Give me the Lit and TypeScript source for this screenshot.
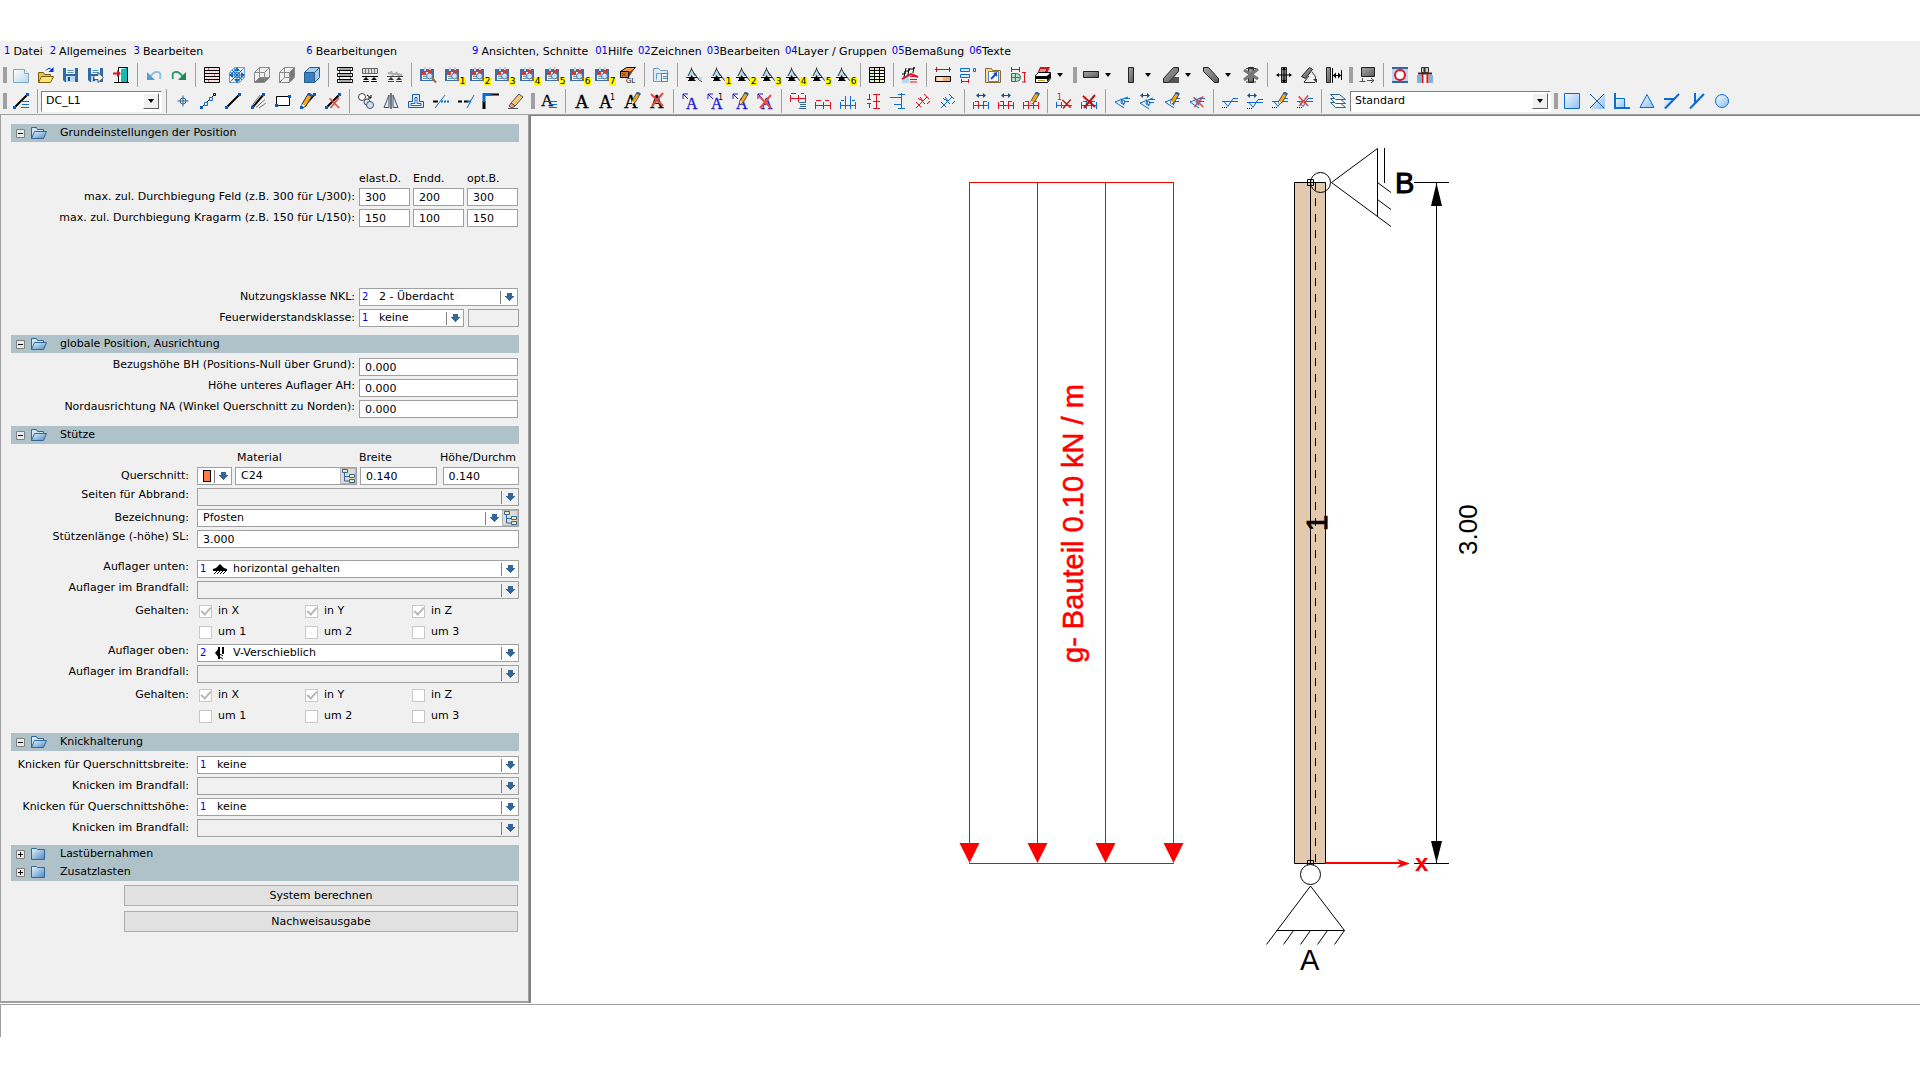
import { LitElement, html, svg, css, nothing } from "lit";
import { customElement, property, state } from "lit/decorators.js";

const K = "#000", R = "#e01020", B = "#0a6cd0", N = "#336699";

const p = (d: string, stroke = K, fill = "none", w = 1) =>
  svg`<path d=${d} stroke=${stroke} fill=${fill} stroke-width=${w}></path>`;
const f = (d: string, fill = K) => svg`<path d=${d} fill=${fill}></path>`;
const glyph = (ch: string, x: number, y: number, size: number, fill = K) =>
  svg`<text x=${x} y=${y} font-size=${size} fill=${fill} font-family="Liberation Serif, serif" stroke=${fill} stroke-width="0.3">${ch}</text>`;

const pencil = svg`${f("M5 11l6-10 4 2-6 10-4 2z", "#f6a81c")}${p("M5 11l6-10 4 2-6 10-4 2z", "#333")}${f("M10 2l1-2h2l3 2-1 2z", "#1f5fa8")}${f("M5 15v-4l3 2z", "#fff0c0")}`;
const cross = svg`${p("M2 3l12 12M14 2L3 15", "#e04a40", "none", 2)}`;
const darkCross = svg`${p("M2 3l12 11M14 2L3 15", "#c01010", "none", 2)}`;
const handle = (x: number, y: number) => f(`M${x} ${y}h3v3h-3z`, "#0a5cb8");
const floppy = svg`${f("M0 1h15v14H2l-2-2z", "#2d6aa5")}${f("M3 1h9v6H3z", "#e8f1fa")}${p("M4.5 3.5h6M4.5 5.5h6", "#5e8fbf")}${f("M3 9h9v6H3z", "#bcd8ef")}${f("M5 10h2v4H5z", "#1e4f80")}`;
const clipboard = svg`${f("M0 2h14v12H0z", "#3b6ea5")}${f("M2 5h10v8H2z", "#f7fbff")}${f("M4 0h2v4H4zM9 0h2v4H9z", "#bcd3e8")}${f("M2 4h4v4H2zM8 3h4v4H8z", "#d23a35")}${p("M3 9.500h4M3 11.500h4", "#6c8fb4")}${p("M12 11l4 4.500", "#b06a2a", "none", 2)}<circle cx="9.500" cy="9" r="3" fill="#c6e2f5" stroke="#4b7196"></circle>`;
const beam = svg`${f("M5.500 1l4 8h-8z", "#b4dcf4")}${p("M5.500.500v2M5.500 2l-3.500 7M5.500 2l4 7", "#333")}${p("M0 10.500h11", K)}${f("M5.500 8l2 3h1v2h1v1H2v-1h1v-2h1z", K)}${p("M7 5q2 2 4 5 2 4 5 4.500", "#234")}${f("M12 10h4v4q-3-1-4-4z", "#b4dcf4")}`;
const letter = glyph("A", 1, 15, 19);
const blueLetter = svg`${glyph("A", 4, 16, 16, "#1a1ad0")}${p("M1 6V1h5M1 1l5 5", "#1a1ad0")}`;
const hDim = (c: string) => p("M0 12.500h16M.5 9v7M8.500 9v7M15.500 9v7M1 7.500h5M10 7.500h4", c);
const chain = (c: string) => p("M0 12.500h16M.5 9v7M5.500 9v7M10.500 9v7M15.500 9v7M2 8.500h4M10 8.500h4", c);
const wide = svg`${p("M4 2.500h8", "#1d4f86")}${f("M6 0v5L3 2.500zM10 0v5l3-2.500z", "#1d4f86")}`;
const eye = svg`${p("M1 9l13-5M1 9l9 6M7 5.500l3 7M10 8.500h5M10 5.500h6", B)}<circle cx="9" cy="9" r="2" fill="none" stroke=${B}></circle>`;
const level = svg`${p("M0 8.500h11M2 8.500l4 5 5-8h5M10 8.500h6", B)}${f("M0 14h1v1H0zM2 14h1v1H2zM4 14h1v1H4z", K)}`;
const rotated = (c: string) => p("M1 15L12 4M1 9l5 5M5 6l5 5M9 1l5 5M3 5l2 2M8 8l-3-4M12 11l3-3", c);
const steel = (d: string) => svg`${p(d, "#222", "url(#steel)")}`;
const cubeLines = (c: string) => p("M.5 5.500h10v10H.5zM.5 5.500l5-5h10l-5 5M15.500.5v10l-5 5M5.500.5v10h10M5.500 10.500l-5 5", c);
const sky = (d: string) => p(d, B, "url(#sky)", 2);

const ICONS: Record<string, unknown> = {
  Neu: svg`${p("M.5 2.500h11l4 4v9H.5z", "#7ba9c6", "url(#sheet)")}${p("M11.500 2.500v4h4", "#7ba9c6", "#fff")}`,
  Öffnen: svg`${p("M.5 15.500v-10h5l1 2h6v3", "#7d5f10", "#f2c14a")}${p("M.5 15.500l3-6h12l-3 6z", "#7d5f10", "#ffe27a")}${p("M8 3.500q3-4 6-.5", "#0030c8")}${f("M15.500 0v5h-5z", "#0030c8")}`,
  Speichern: floppy,
  Speichern_unter: svg`${floppy}${p("M6 8.500h4V5.500l5.500 5-5.500 5V12.500H6z", "#4a5a6a", "#fff")}`,
  Beenden: svg`${p("M5.500.5h9v15h-9z", K, "#fff")}${f("M8 2l6-1v14l-6 1z", "#16b8b4")}${p("M1 15.500h15", K)}${p("M0 6.500h5", R, "none", 2)}${f("M4 3v7l4-3.500z", R)}`,
  Rückgängig: svg`${p("M14 12q2-8-4-7-3 .5-6 5", "#8cbfe6", "none", 2)}${f("M1 5v8h8z", "#5a9bd0")}`,
  Wiederholen: svg`${p("M2 12Q0 4 6 5q3 .5 6 5", "#28a068", "none", 2)}${f("M15 5v8H7z", "#1d8c58")}`,
  Wandansicht: svg`${f("M0 0h16v16H0z", "#f4dede")}${p("M.5.5h15v15H.5zM0 3.500h16M0 6.500h16M0 9.500h16M0 12.500h16", K)}${p("M4.500 1v2M10.500 7v2M4.500 13v2", "#a77")}`,
  Alles_zeigen: svg`${cubeLines("#6aa5d8")}${p("M8 1v14M1 8h14M3 3l10 10M13 3L3 13", "#1468b8")}${f("M8 0l3 4H5zM8 16l3-4H5zM0 8l4-3v6zM16 8l-4-3v6z", "#1468b8")}`,
  Unterseite: svg`${f("M1 15l4-4h10l-4 4z", "#777")}${cubeLines("#8a8a8a")}`,
  Seitenansicht: svg`${f("M11 5l4-4v10l-4 4z", "#777")}${cubeLines("#8a8a8a")}`,
  Vorderansicht: svg`${p("M.5 5.500l5-5h10v10l-5 5H.5z", "#2a5f94", "#a8cdec")}${p("M.5 5.500h10v10H.5z", "#2a5f94", "#3c7fc0")}${p("M10.500 5.500l5-5", "#2a5f94")}`,
  Balkenlagen: svg`${p("M.5.5h15v3H.5zM.5 6.500h15v3H.5zM.5 12.500h15v3H.5z", K, "#fff")}${p("M2.500 4v2M13.500 4v2M2.500 10v2M13.500 10v2M2 2h12M2 8h12M2 14h12", "#555")}`,
  Flächenlast: svg`${p("M.5 1.500h15v5H.5z", "#666", "#ddd")}${p("M3.500 2v4M6.500 2v4M9.500 2v4M12.500 2v4", "#777")}${p("M0 9.500h16M1 14.500h6M9 14.500h6", K)}${f("M4 10l3 3H1zM12 10l3 3H9z")}`,
  Auflast: svg`${p("M1 6l14 2M4 4l2 5M9 5l3 4", "#aaa", "none", 2)}${p("M0 9.500h16M1 14.500h6M9 14.500h6", "#444")}${f("M4 10l3 3H1zM12 10l3 3H9z", "#333")}`,
  Ansicht: clipboard,
  Ansicht_GL: svg`${p("M.5 4.500l6-4h9l-5 5z", K, "#f0a050")}${p("M.5 4.500h8v6h-8z", K, "#d9802e")}${f("M9 10V5l6-4z", "#7a4010")}${p("M2 6l4 3M2 9l4-3", "#7a4010")}<text x="6" y="16" font-size="7" fill="#000" font-family="Liberation Sans, sans-serif">GL</text>`,
  Projekt: svg`${p("M.5 14.500v-13h5l2 2h7v11z", "#6a9cc4", "#dcebf6")}${p("M3.500 12.500v-6h12", "#6a9cc4")}${p("M8.500 6.500h6v8h-6z", "#4d80ad", "#fff")}${p("M10 9.500h4M10 11.500h4", "#4d80ad")}`,
  Träger: beam,
  Liste: svg`${f("M0 0h16v4H0z", "#f8cfcf")}${f("M0 4h16v8H0z", "#fff")}${f("M0 4h5v12H0z", "#d4f0c8")}${f("M5 10h11v6H5z", "#f6f6c0")}${p("M.5.5h15v15H.5zM0 3.500h16M0 6.500h16M0 9.500h16M0 12.500h16M5.500 0v16M10.500 0v16", K)}`,
  Treppe: svg`${f("M0 11l7-5v10H0z", "#b8d8f0")}${p("M0 7h3V4h4V2h5V0M2 10l2-9M6 8l1-7M11 6l1-6", K)}${p("M0 12l9-5 7 3", R, "none", 2)}${p("M8 9.500h7M8 12.500h7M8 15h7", R)}`,
  Holzmaß: svg`${p("M0 2.500h16M1.500 0v5M14.500 0v5", "#b02020")}${p("M.5 9.500h15v5H.5z", K, "#f5b070")}${f("M2 10h6v4H2z", "#ffe0bc")}`,
  Einzelmaß: svg`${p("M.5 1.500h9v3h-9zM.5 7.500h9v3h-9z", B, "#d6e9fa")}${p("M13.500 1.500h2v3h-2z", B)}${p("M1 14.500h8M1.500 12v4M8.500 12v4", R)}`,
  Projektordner: svg`${p("M.5 15.500V1.500h6l1 2h8v12z", "#8a6c28", "#f5dc96")}${p("M3.500 4.500h10v10h-10z", "#5a7fb0", "#fff")}${p("M6 12l5-5", "#1b49c8", "none", 2)}${f("M12 5v5L8 6z", "#1b49c8")}`,
  Querschnittmaß: svg`${p("M1 2.500h9M1.500 0v5M9.500 0v5M14.500 5v10M12 5.500h4M12 15h4", R)}${p("M1.500 6.500h5q4 0 4 4t-4 4h-5z", "#2b7a50", "#b8e0d0")}${p("M5.500 7v8M1 10.500h9", "#2f6cae")}`,
  Drucken: svg`${f("M5 0h10l-3 7H2z", "#c81818")}${p("M5 3h6M4 5h6", "#fff")}${p("M.5 8.500l3-3h12v6l-3 4H.5z", K, "#fff")}${f("M1 9h11v3H1zM12 9l3-3v5l-3 4z")}${p("M3 13.500h7", "#c8a020")}`,
  Balken: steel("M.5 4.500h15v6H.5z"),
  Stütze: steel("M5.500.5h5v15h-5z"),
  Sparren: svg`${f("M10 10h6v6H5z", "#555")}${steel("M.5 11.500L10.500.5h5v4l-10 11h-5z")}`,
  Strebe: steel("M.5.5h5l10 11v4h-4L.5 4.500z"),
  Stab_löschen: svg`${steel("M5.500.5h5v15h-5z")}${p("M1 3l14 9M15 2L1 13", "#777", "none", 3)}${p("M3 1.500h10M3 15h10", "#333")}`,
  Schieben: svg`${steel("M5.500.5h5v15h-5z")}${p("M8 1v14M1 8h14", K)}${f("M8 0l2 3H6zM8 16l2-3H6zM0 8l3-2v4zM16 8l-3-2v4z")}`,
  Drehen: svg`${steel("M.5 9.500l8-9 3 2-7 9z")}${p("M3 15.500h11M3 15L8 9M11 5q4 3 4 9", "#333")}${f("M12 12h4v4z", "#333")}`,
  Abstand: svg`${steel("M.5.5h4v15h-4z")}${p("M6.500 1v15M6 8.500h9M15.500 3v10", K)}${f("M7 8.500l3-3v6zM15 8.500l-3-3v6z")}`,
  Platte: svg`${steel("M2.500.5h13v9h-13z")}${p("M.5 14.500h6M3.500 11v4M8 13.500h7M12 11l3 2.500-3 2.500", "#555")}`,
  Kreisausschnitt: svg`${f("M0 0h16v16H0z", "#b9d9f2")}${p("M0 1h16M0 15h16", N, "none", 2)}<circle cx="8" cy="8" r="5" fill="#fff" stroke=${R} stroke-width="2"></circle>`,
  Verbinder: svg`${p("M4.500.5h7v5h-7z", "#333", "#ccc")}${p("M7.500 1v4M1 6.500h14", "#333", "none", 2)}${f("M0 8h4v8H0zM12 8h4v8h-4z", "#7fb3dc")}${p("M5.500 7v9M10.500 7v9", "#d81818", "none", 2)}`,

  Linientyp: svg`${p("M1 15L14 2", K, "none", 2)}${handle(0, 13)}${handle(13, 0)}${p("M8 8.500h8M9 11.500h7M8 14.500h8", B)}`,
  Punkt: svg`<circle cx="8" cy="8" r="3" fill="none" stroke=${N}></circle>${p("M8 2.500v11M2.500 8h11", N)}`,
  Punktkette: svg`${p("M2 14l3-3M7 9l2-2M11 5l3-3", K)}${p("M4.500 9.500h3v3h-3zM9.500 4.500h3v3h-3z", B, "#fff")}${handle(0, 13)}${p("M13.500.5h2v2h-2z", K)}`,
  Linie: svg`${p("M1 15L15 1", K, "none", 2)}${handle(0, 13)}${handle(13, 0)}`,
  Parallele: svg`${p("M1 14L10 2M6 14.500l9-8", "#777")}${p("M3 14L14 1", K, "none", 2)}${p("M9 15l7-5", "#777")}${handle(1, 13)}${handle(12, 0)}`,
  Rechteck: svg`${p("M1.500 3.500h13v9h-13z", K, "#fff")}${handle(0, 11)}${handle(13, 2)}`,
  Linie_bearbeiten: svg`${p("M2 15L15 1", K, "none", 2)}<g transform="translate(-3 0)">${pencil}</g>${handle(0, 13)}${handle(13, 0)}`,
  Linie_löschen: svg`${p("M1 15L15 1", K, "none", 2)}${handle(0, 13)}${handle(13, 0)}<g transform="translate(3 3) scale(.8)">${cross}</g>`,
  Kopieren: svg`<circle cx="4" cy="4" r="3.500" fill="#fff" stroke="#444"></circle><circle cx="9" cy="9" r="3" fill="#cfe0f0" stroke="#456"></circle><circle cx="12" cy="12" r="3.500" fill="#cfe0f0" stroke="#456"></circle>${p("M9 2l4 3M13 2v3h-3", K)}`,
  Spiegeln: svg`${p("M1 14.500L6 2v12.500zM10 2l5 12.500h-5z", "#456", "#dceaf6")}${p("M8 0v16", K)}`,
  Kontur: svg`${p("M.5 14.500v-6h4v-7h7v7h4v6z", "#1f5f9f", "#dceaf8")}${p("M3 12.500v-2h4v-6h2v6h4v2z", B, "#fff")}`,
  Trennen: svg`${p("M0 8.500h5", K, "none", 2)}${p("M2 15L12 2", B)}${p("M8 8.500h2M11 8.500h2M14 8.500h2", B, "none", 2)}`,
  Verlängern: svg`${p("M0 8.500h4M6 8.500h4", K, "none", 2)}${p("M9 15l7-13", B)}${p("M9 8.500h4", B, "none", 2)}`,
  Ecke: svg`${p("M1 16V8", K, "none", 3)}${p("M1 9V1.500h8", B, "none", 3)}${p("M9 1.500h7", K, "none", 2)}`,
  Radieren: svg`${p("M3 10l8-9 4 3-8 9z", "#555", "#f0c878")}${p("M3 10l4 3-3 2-3-2z", "#555", "#f4a0a0")}${p("M0 15.500h10", "#555")}`,
  Texttyp: svg`${glyph("A", 0, 13, 17)}${p("M8 8.500h8M9 11.500h7M8 14.500h8", B)}`,
  Text: letter,
  Text_Index: svg`${glyph("A", 0, 15, 18)}<text x="11" y="7" font-size="8" fill="#000" font-family="DejaVu Sans, sans-serif">1</text>`,
  Text_bearbeiten: svg`${glyph("A", 0, 15, 19)}<g transform="translate(4 -1) scale(.8)">${pencil}</g>`,
  Text_löschen: svg`${letter}<g transform="translate(0 -2)">${cross}</g>`,
  Hinweis: blueLetter,
  Hinweis_Index: svg`${blueLetter}<text x="11" y="7" font-size="8" fill="#000" font-family="DejaVu Sans, sans-serif">1</text>`,
  Hinweis_bearbeiten: svg`${blueLetter}<g transform="translate(4 -1) scale(.8)">${pencil}</g>`,
  Hinweis_löschen: svg`${blueLetter}${cross}`,
  Bemaßungstyp: svg`${p("M0 5.500h16M.5 2v7M8.500 2v7M15.500 2v7M1 .5h5M11 .5h3", R)}${p("M9 9.500h7M10 11.500h6M10 13.500h6M9 15.500h7", N)}`,
  Maß_waagerecht: hDim(R),
  Maß_Kette: p("M0 12.500h16M.5 9v7M5.500 3v13M10.500 3v13M15.500 9v7M1 7.500h3M12 7.500h3", B),
  Maß_senkrecht: p("M11.500 1v15M8 1.500h7M8 8.500h7M8 15.500h7M4.500 1v6M4.500 11v4M2 6.500h4M2 10.500h4", R),
  Maß_Höhe: p("M11.500 0v16M8 1.500h7M0 4.500h12M4 11.500h8M8 15.500h7", B),
  Maß_schräg: rotated(R),
  Maß_schräg_Kette: rotated(B),
  Maß_Breite: svg`${chain(B)}${p("M4 12.500h9M5.500 9v6M10.500 9v6", R)}${wide}`,
  Maß_Abstand: svg`${chain(R)}${wide}`,
  Maß_bearbeiten: svg`${chain(R)}<g transform="translate(4 -1) scale(.8)">${pencil}</g>`,
  Einzelmaß_löschen: svg`${p("M0 12.500h16M.5 9v6M5.500 9v6", B)}<g transform="translate(5 5) scale(.7)">${darkCross}</g><text x="1" y="7" font-size="8" fill="#e01020" font-family="DejaVu Sans, sans-serif">1</text>`,
  Maß_löschen: svg`${chain(B)}${darkCross}`,
  Blickpunkt: eye,
  Blickpunkt_Breite: svg`<g transform="translate(0 1)">${eye}</g><g transform="translate(-2 0)">${wide}</g>`,
  Blickpunkt_bearbeiten: svg`${eye}<g transform="translate(3 -1) scale(.8)">${pencil}</g>`,
  Blickpunkt_löschen: svg`${eye}<g transform="translate(3 2) scale(.8)">${cross}</g>`,
  Höhenkote: level,
  Höhenkote_Breite: svg`<g transform="translate(0 1)">${level}</g><g transform="translate(-3 0)">${wide}</g>`,
  Höhenkote_bearbeiten: svg`${level}<g transform="translate(3 -1) scale(.8)">${pencil}</g>`,
  Höhenkote_löschen: svg`${level}<g transform="translate(0 1) scale(.8)">${cross}</g>`,
  Ebenen: svg`${p("M.5 9.500h9l6 5h-10z", "#2d5f8f", "#fff")}${p("M.5 5.500h9l6 5h-10z", "#2d5f8f", "#fff")}${p("M.5 1.500h9l6 5h-10z", "#2d5f8f", "#e8f2fb")}`,
  Fang_Fläche: p("M.5.5h15v15H.5z", B, "url(#sky)"),
  Fang_Schnittpunkt: svg`${f("M1 16l7-8 8 8zM8 8l8-8v16z", "url(#sky)")}${p("M1 1l14 14M15 1L1 15", "#1660b0")}`,
  Fang_Lot: svg`${f("M1 5h10v10H1z", "url(#sky)")}${p("M1.500 0v14.500h14.500M1 5.500h9.500v9", B, "none", 1)}${p("M1 0v15h15", B, "none", 2)}`,
  Fang_Mitte: p("M8 1.500l7 13H1z", B, "url(#sky)"),
  Fang_Linie: svg`${f("M1 6h10l-8 9H0z", "url(#sky)")}${p("M0 6h10", B, "none", 2)}${p("M1 15.500L15 1", B, "none", 2)}`,
  Fang_Parallele: svg`${f("M7 1h8l-8 10z", "url(#sky)")}${p("M6 0v10M1 15.500L15 1", B, "none", 2)}`,
  Fang_Kreis: svg`<circle cx="8" cy="8" r="6.500" fill="url(#sky)" stroke=${B} stroke-width="1"></circle>`,

  "ordner-offen": svg`${p("M.5 11.500V.5h5l1 2h6v2", N, "#cfe4f5")}${p("M.5 11.500l3-7h12l-3 7z", N, "url(#folder)")}`,
  "ordner-zu": svg`${p("M.5 11.500V.5h5l1 1h7v10z", N, "url(#folder)")}`,
  baum: svg`${p("M3.500 3v9h5M3.500 7.500h5", N)}${p("M1.500.5h5v3h-5zM8.500 5.500h5v3h-5zM8.500 10.500h5v3h-5z", N, "#ffe9a0")}`,
  "lager-unten": svg`${f("M7 1l4 4 3 1v2H0V6l3-1z")}${p("M1 11l3-3M4 11l3-3M7 11l3-3M10 11l3-3", K)}`,
  "lager-oben": svg`${f("M2 6l4-5v10z")}${f("M5 0h2v12H5zM9 0h2v7H9z")}${p("M7 7l3 2M7 10l3 2", K)}`,
};

const DEFS = svg`<defs>
  <linearGradient id="steel" x1="0" y1="0" x2="1" y2="1"><stop offset="0" stop-color="#a8a8a8"></stop><stop offset="1" stop-color="#5a5a5a"></stop></linearGradient>
  <linearGradient id="sky" x1="0" y1="0" x2="1" y2="1"><stop offset="0" stop-color="#f2f9ff"></stop><stop offset="1" stop-color="#8cc0f2"></stop></linearGradient>
  <linearGradient id="sheet" x1="0" y1="0" x2="1" y2="1"><stop offset="0" stop-color="#ffffff"></stop><stop offset="1" stop-color="#b4d8ec"></stop></linearGradient>
  <linearGradient id="folder" x1="0" y1="0" x2="1" y2="1"><stop offset="0" stop-color="#eaf4fc"></stop><stop offset="1" stop-color="#4a8cc4"></stop></linearGradient>
</defs>`;

const icon = (name: string, w = 16, h = 16) =>
  html`<svg class="icon" width=${w} height=${h} viewBox=${`0 0 ${w} ${h}`} aria-hidden="true">${DEFS}${ICONS[name]}</svg>`;

const TOP_BAR =
  ": Neu Öffnen Speichern Speichern_unter Beenden | Rückgängig Wiederholen | Wandansicht Alles_zeigen Unterseite Seitenansicht Vorderansicht | Balkenlagen Flächenlast Auflast | " +
  "Ansicht Ansicht#1 Ansicht#2 Ansicht#3 Ansicht#4 Ansicht#5 Ansicht#6 Ansicht#7 Ansicht_GL | Projekt | Träger Träger#1 Träger#2 Träger#3 Träger#4 Träger#5 Träger#6 | Liste | Treppe | " +
  "Holzmaß Einzelmaß Projektordner Querschnittmaß Drucken v : Balken v Stütze v Sparren v Strebe v Stab_löschen | Schieben Drehen Abstand : Platte | Kreisausschnitt Verbinder";
const LINE_BAR =
  ": Linientyp | $Linienstil | Punkt Punktkette Linie Parallele Rechteck Linie_bearbeiten Linie_löschen | Kopieren Spiegeln Kontur Trennen Verlängern Ecke Radieren : Texttyp | " +
  "Text Text_Index Text_bearbeiten Text_löschen | Hinweis Hinweis_Index Hinweis_bearbeiten Hinweis_löschen | " +
  "Bemaßungstyp Maß_waagerecht Maß_Kette Maß_senkrecht Maß_Höhe Maß_schräg Maß_schräg_Kette | Maß_Breite Maß_Abstand Maß_bearbeiten | Einzelmaß_löschen Maß_löschen | " +
  "Blickpunkt Blickpunkt_Breite Blickpunkt_bearbeiten Blickpunkt_löschen | Höhenkote Höhenkote_Breite Höhenkote_bearbeiten Höhenkote_löschen | Ebenen $Layer : " +
  "Fang_Fläche Fang_Schnittpunkt Fang_Lot Fang_Mitte Fang_Linie Fang_Parallele Fang_Kreis";

const CHOICES: Record<string, string> = { Linienstil: "DC_L1", Layer: "Standard" };

const MENU: Array<[string, string, string?]> = [
  ["1", "Datei"], ["2", "Allgemeines"], ["3", "Bearbeiten", "far"], ["6", "Bearbeitungen", "mid"], ["9", "Ansichten, Schnitte"],
  ["01", "Hilfe"], ["02", "Zeichnen"], ["03", "Bearbeiten"], ["04", "Layer / Gruppen"], ["05", "Bemaßung"], ["06", "Texte"],
];

const base = css`
  :host { box-sizing: border-box; }
  * { box-sizing: border-box; }
  button, input, select { font: inherit; color: inherit; margin: 0; padding: 0; border: 0; background: none; border-radius: 0; outline: none; }
  select { appearance: none; min-width: 0; flex: 1; height: 100%; }
  .icon { display: block; flex: none; overflow: visible; }
`;

@customElement("tool-bars")
class ToolBars extends LitElement {
  static styles = [base, css`
    :host { display: block; background: #f0f0f0; border-bottom: 1px solid #a0a0a0; white-space: nowrap; overflow: hidden; }
    .menu { display: flex; height: 21px; padding-left: 4px; gap: 7px; }
    .entry { display: flex; align-items: center; gap: 3px; }
    .entry.tight { gap: 0; margin-right: -2px; }
    .far { margin-right: 96px; }
    .mid { margin-right: 68px; }
    .key { color: #0000e6; font-size: 10px; padding-bottom: 2px; }
    .bar { display: flex; align-items: center; height: 26px; }
    .tool { position: relative; flex: none; width: 25px; height: 24px; display: grid; place-items: center; }
    .badge { position: absolute; right: -1px; bottom: 1px; width: 7px; height: 9px; background: #ffff00; font-size: 9px; line-height: 9px; text-align: center; }
    .sep { flex: none; width: 8px; height: 24px; display: grid; place-items: center; }
    .sep::before { content: ""; width: 1px; height: 24px; background: #a0a0a0; }
    .grip { flex: none; width: 8px; height: 16px; padding: 0 1px 0 3px; }
    .grip::before { content: ""; display: block; height: 16px; background: radial-gradient(circle at 1px 1px, #a0a0a0 1px, transparent 1px) 0 0 / 2px 2px; }
    .drop { flex: none; width: 15px; height: 24px; padding-left: 2px; display: flex; align-items: center; }
    .choice { flex: none; display: flex; height: 21px; background: #fff; border: 1px solid; border-color: #808080 #fff #fff #808080; padding: 1px 2px 1px 4px; }
    .linienstil { width: 121px; }
    .layer { width: 201px; }
    .open { width: 16px; height: 16px; background: #f0f0f0; border: 1px solid; border-color: #fff #606060 #606060 #fff; display: grid; place-items: center; pointer-events: none; }
  `];

  private arrow() {
    return html`<svg class="icon" width="6" height="4" viewBox="0 0 6 4" aria-hidden="true"><path d="M0 0h6L3 4z"></path></svg>`;
  }

  private item(token: string) {
    if (token === "|") return html`<span class="sep"></span>`;
    if (token === ":") return html`<span class="grip"></span>`;
    if (token === "v") return html`<button class="drop" aria-label="Auswahl">${this.arrow()}</button>`;
    if (token[0] === "$") {
      const name = token.slice(1);
      return html`<label class="choice ${name.toLowerCase()}"><select aria-label=${name}><option>${CHOICES[name]}</option></select><span class="open">${this.arrow()}</span></label>`;
    }
    const [name, badge] = token.split("#");
    return html`<button class="tool" aria-label=${name.replace(/_/g, " ") + (badge ? " " + badge : "")}>${icon(name)}${badge ? html`<span class="badge">${badge}</span>` : nothing}</button>`;
  }

  render() {
    return html`
      <nav class="menu">${MENU.map(([key, text, gap]) => html`
        <button class="entry ${key.length > 1 ? "tight" : ""} ${gap ?? ""}"><span class="key">${key}</span><span>${text}</span></button>`)}
      </nav>
      <div class="bar">${TOP_BAR.split(" ").map((t) => this.item(t))}</div>
      <div class="bar">${LINE_BAR.split(" ").map((t) => this.item(t))}</div>`;
  }
}

@customElement("group-box")
class GroupBox extends LitElement {
  @property() heading = "";
  @property({ type: Boolean, reflect: true }) open = false;
  static styles = [base, css`
    :host { display: block; }
    :host([open]) { margin-bottom: 8px; }
    .head { display: flex; align-items: center; width: 100%; height: 18px; padding-left: 5px; background: #afc2c9; text-align: left; }
    .sign { width: 9px; height: 9px; margin-right: 6px; }
    .name { flex: 1; }
    .folder { width: 29px; }
    .body { display: flex; flex-direction: column; gap: 3px; padding-top: 5px; }
  `];
  render() {
    return html`
      <button class="head" aria-expanded=${this.open} @click=${() => (this.open = !this.open)}>
        <svg class="icon sign" viewBox="0 0 9 9" aria-hidden="true"><path d="M.5.5h8v8h-8z" fill="#e6ecee" stroke="#808080"></path><path d=${this.open ? "M2 4.500h5" : "M2 4.500h5M4.500 2v5"} stroke="#000"></path></svg>
        <span class="folder">${icon(this.open ? "ordner-offen" : "ordner-zu", 16, 12)}</span>
        <span class="name">${this.heading}</span>
      </button>
      ${this.open ? html`<div class="body"><slot></slot></div>` : nothing}`;
  }
}

interface Combo { id: string; value?: string; key?: string; symbol?: string; swatch?: boolean; tree?: boolean; }

@customElement("column-form")
class ColumnForm extends LitElement {
  @state() private held: Record<string, boolean[]> = {
    unten: [true, true, true, false, false, false],
    oben: [true, true, false, false, false, false],
  };
  static styles = [base, css`
    :host { display: block; background: #f0f0f0; border: solid #a0a0a0; border-width: 0 1px 2px 1px; padding: 9px 9px 0 10px; }
    .row { display: flex; height: 18px; gap: 4px; align-items: center; }
    .row.low { gap: 8px; }
    .caption { flex: 1; text-align: right; white-space: nowrap; line-height: 16px; }
    .high { padding-bottom: 4px; }
    .fields { display: flex; gap: 4px; height: 18px; flex: none; }
    .narrow { width: 160px; }
    .inset { padding-right: 1px; }
    .wide { width: 322px; }
    .titles { display: flex; justify-content: flex-end; height: 15px; line-height: 18px; white-space: nowrap; }
    .top { padding-top: 25px; height: 38px; line-height: 13px; }
    .third { width: 54px; }
    .third.last { width: 52px; }
    .material { width: 122px; }
    .breite { width: 81px; }
    .hoehe { width: 79px; }
    .apart { margin-top: 58px; }
    .near { margin-top: 9px; }
    .field { flex: 1; min-width: 0; height: 18px; border: 1px solid #a0a0a0; background: #fff; padding: 0 5px; }
    .field:disabled { background: #f0f0f0; }
    .third-field { flex: 0 0 51px; padding: 0 5px; }
    .third-fields { gap: 3px; }
    .combo { flex: 1; min-width: 0; display: flex; align-items: center; height: 18px; border: 1px solid #a0a0a0; background: #fff; }
    .combo.off { background: #f0f0f0; }
    .combo.small { flex: 0 0 105px; }
    .combo.swatched { flex: 0 0 35px; }
    .combo.stoff { flex: 0 0 122px; }
    .key { width: 19px; padding-left: 2px; color: #0000e6; font-size: 10px; }
    .key.slim { width: 15px; }
    .symbol { margin-right: 6px; }
    .plain { padding-left: 5px; }
    .swatch { flex: none; width: 8px; height: 12px; margin-left: 5px; background: #ff7f40; border: 1px solid #000; }
    .down { flex: none; width: 17px; height: 13px; border-left: 1px solid #808080; display: grid; place-items: center; pointer-events: none; }
    .tree { flex: none; width: 16px; height: 16px; background: #dcdcdc; border: 1px solid #b4b4b4; display: grid; place-items: center; }
    .dims { display: flex; gap: 6px; flex: 1; min-width: 0; }
    .material-fields { gap: 3px; }
    .checks { display: grid; grid-template-columns: 106px 107px 1fr; align-items: center; width: 322px; padding-left: 2px; }
    .check { display: flex; align-items: center; gap: 6px; white-space: nowrap; }
    .box { appearance: none; width: 13px; height: 13px; background: #fff; border: 1px solid #c8c8c8; display: grid; place-items: center; }
    .box:checked::after { content: ""; width: 4px; height: 8px; border: solid #b8b8b8; border-width: 0 2px 2px 0; transform: translateY(-1px) rotate(42deg); }
    .actions { display: flex; flex-direction: column; gap: 5px; padding: 4px 1px 0 113px; }
    .action { height: 21px; background: #e1e1e1; border: 1px solid #adadad; }
  `];

  private caption(id: string, text: string, high = false) {
    return html`<label class="caption ${high ? "high" : ""}" for=${id}>${text}</label>`;
  }
  private down() {
    return html`<span class="down"><svg class="icon" width="9" height="8" viewBox="0 0 9 8" shape-rendering="crispEdges" aria-hidden="true"><path d="M2 0h5v3h2v1H8v1H7v1H6v1H5v1H4V7H3V6H2V5H1V4H0V3h2z" fill="#336699"></path></svg></span>`;
  }
  private tree() {
    return html`<button class="tree" aria-label="Katalog">${icon("baum", 14, 14)}</button>`;
  }
  private combo(c: Combo, kind = "") {
    const off = c.value === undefined && !c.swatch;
    return html`<div class="combo ${off ? "off" : ""} ${kind}">
      ${c.key ? html`<span class="key ${c.symbol ? "slim" : ""}">${c.key}</span>` : nothing}
      ${c.symbol ? html`<span class="symbol">${icon(c.symbol, 14, 12)}</span>` : nothing}
      ${c.swatch ? html`<span class="swatch"></span>` : nothing}
      <select id=${c.id} class=${c.key || c.swatch ? "" : "plain"} ?disabled=${off} aria-label=${c.swatch ? "Querschnittsform" : nothing}><option>${c.value ?? ""}</option></select>
      ${this.down()}${c.tree ? this.tree() : nothing}
    </div>`;
  }
  private limits(id: string, text: string, values: string[]) {
    return html`<div class="row">${this.caption(id + "0", text)}
      <div class="fields narrow third-fields">${values.map((v, i) => html`<input class="field third-field" id=${id + i} aria-label=${i ? text + " " + (i + 1) : nothing} .value=${v}>`)}</div></div>`;
  }
  private height(id: string, text: string) {
    return html`<div class="row">${this.caption(id, text, true)}
      <div class="fields narrow inset"><input class="field" id=${id} .value=${"0.000"}></div></div>`;
  }
  private line(c: Combo, text: string, high = false, extra = "") {
    return html`<div class="row low ${extra}">${this.caption(c.id, text, high)}<div class="fields wide">${this.combo(c)}</div></div>`;
  }
  private checks(id: string) {
    const names = ["in X", "in Y", "in Z", "um 1", "um 2", "um 3"];
    return [0, 3].map((from) => html`<div class="row low"><span class="caption">${from ? "" : "Gehalten:"}</span>
      <div class="checks">${names.slice(from, from + 3).map((n, i) => html`<label class="check"><input class="box" type="checkbox" disabled .checked=${this.held[id][from + i]}>${n}</label>`)}</div></div>`);
  }

  render() {
    return html`
      <group-box heading="Grundeinstellungen der Position" open>
        <div class="titles top"><span class="third">elast.D.</span><span class="third">Endd.</span><span class="third last">opt.B.</span></div>
        ${this.limits("feld", "max. zul. Durchbiegung Feld (z.B. 300 für L/300):", ["300", "200", "300"])}
        ${this.limits("krag", "max. zul. Durchbiegung Kragarm (z.B. 150 für L/150):", ["150", "100", "150"])}
        <div class="row apart">${this.caption("nkl", "Nutzungsklasse NKL:")}<div class="fields narrow inset">${this.combo({ id: "nkl", key: "2", value: "2 - Überdacht" })}</div></div>
        <div class="row">${this.caption("fwk", "Feuerwiderstandsklasse:")}<div class="fields narrow">${this.combo({ id: "fwk", key: "1", value: "keine" }, "small")}<input class="field" disabled aria-label="Feuerwiderstandsdauer"></div></div>
      </group-box>
      <group-box heading="globale Position, Ausrichtung" open>
        ${this.height("bh", "Bezugshöhe BH (Positions-Null über Grund):")}
        ${this.height("ah", "Höhe unteres Auflager AH:")}
        ${this.height("na", "Nordausrichtung NA (Winkel Querschnitt zu Norden):")}
      </group-box>
      <group-box heading="Stütze" open>
        <div class="titles"><span class="material">Material</span><label class="breite" for="breite">Breite</label><label class="hoehe" for="hoehe">Höhe/Durchm</label></div>
        <div class="row low">${this.caption("qs", "Querschnitt:")}
          <div class="fields wide material-fields">
            ${this.combo({ id: "qs", swatch: true }, "swatched")}
            <div class="combo stoff"><select class="plain" aria-label="Material"><option>C24</option></select>${this.tree()}</div>
            <div class="dims"><input class="field" id="breite" .value=${"0.140"}><input class="field" id="hoehe" .value=${"0.140"}></div>
          </div></div>
        ${this.line({ id: "abbrand" }, "Seiten für Abbrand:", true)}
        ${this.line({ id: "bez", value: "Pfosten", tree: true }, "Bezeichnung:")}
        <div class="row low">${this.caption("sl", "Stützenlänge (-höhe) SL:", true)}<div class="fields wide"><input class="field" id="sl" .value=${"3.000"}></div></div>
        ${this.line({ id: "au", key: "1", symbol: "lager-unten", value: "horizontal gehalten" }, "Auflager unten:", true, "near")}
        ${this.line({ id: "aub" }, "Auflager im Brandfall:", true)}
        ${this.checks("unten")}
        ${this.line({ id: "ao", key: "2", symbol: "lager-oben", value: "V-Verschieblich" }, "Auflager oben:", true)}
        ${this.line({ id: "aob" }, "Auflager im Brandfall:", true)}
        ${this.checks("oben")}
      </group-box>
      <group-box heading="Knickhalterung" open>
        ${this.line({ id: "kb", key: "1", value: "keine" }, "Knicken für Querschnittsbreite:")}
        ${this.line({ id: "kbb" }, "Knicken im Brandfall:")}
        ${this.line({ id: "kh", key: "1", value: "keine" }, "Knicken für Querschnittshöhe:")}
        ${this.line({ id: "khb" }, "Knicken im Brandfall:")}
      </group-box>
      <group-box heading="Lastübernahmen"></group-box>
      <group-box heading="Zusatzlasten"></group-box>
      <div class="actions"><button class="action">System berechnen</button><button class="action">Nachweisausgabe</button></div>`;
  }
}

@customElement("system-drawing")
class SystemDrawing extends LitElement {
  static styles = css`
    :host { display: block; box-sizing: border-box; background: #fff; border: solid #808080; border-width: 1px 0 0 2px; overflow: hidden; }
    .sheet { display: block; width: 100%; height: 100%; }
    .label { font-family: "Liberation Sans", Arial, sans-serif; font-size: 29px; }
    .measure { font-size: 26px; }
    .axis { font-size: 24px; font-weight: bold; }
    .strong { stroke: #000; stroke-width: 1px; }
    .load { fill: #f00; stroke: #f00; stroke-width: 0.5px; }
  `;
  render() {
    const loads = [969, 1037, 1105, 1173];
    return html`<svg class="sheet" role="img" aria-label="Stützensystem">
      <g transform="translate(-531 -116)" fill="none" stroke="#000">
        <g stroke="#f00">
          <path d="M969 182.500h205M969 863.500h205"></path>
          ${loads.map((x) => svg`<path d=${`M${x + 0.5} 182v680`}></path><path d=${`M${x - 9.5} 843h20l-10 20z`} fill="#f00" stroke="none"></path>`)}
          <path d="M1326 863h75" stroke-width="2"></path>
          <path d="M1410 863.500l-13-4.500 4 4.500-4 4.500z" fill="#f00" stroke="none"></path>
        </g>
        <path d="M1294.500 182.500h31v681h-31z" fill="#e3c9ae"></path>
        <path d="M1310.500 179v688M1307.500 179.500h6v6h-6zM1307 182.500h7M1307.500 860.500h6v6h-6z"></path>
        <path d="M1315.500 182v681" stroke-dasharray="8 8"></path>
        <circle cx="1320.500" cy="182.500" r="10"></circle>
        <path d="M1391 226.500l-59.500-44 46-34v68M1384.500 148v35M1377.500 182.500l13.500 10M1377.500 199.500l13.500 10"></path>
        <circle cx="1310.500" cy="874.500" r="10" fill="#fff"></circle>
        <path d="M1266.500 944.500l44-58.500 34 44.500h-68M1293.500 930.500l-10 14M1310.500 930.500l-10 14M1327.500 930.500l-10 14M1344.500 930.500l-10 14"></path>
        <path d="M1414 182.500h35M1414 863.500h35M1436.500 183v680"></path>
        <path d="M1436.500 183l5.500 23h-11zM1436.500 863l5.500-22h-11z" fill="#000" stroke="none"></path>
        <g fill="#000" stroke="none">
          <text class="label load" transform="translate(1083 663) rotate(-90)">g- Bauteil 0.10 kN / m</text>
          <text class="label measure" transform="translate(1477 555) rotate(-90)">3.00</text>
          <text class="label strong" transform="translate(1327 531) rotate(-90)">1</text>
          <text class="label strong" x="1395" y="193">B</text>
          <text class="label" x="1300" y="970">A</text>
          <text class="label axis" fill="#f00" x="1415" y="871">x</text>
        </g>
      </g>
    </svg>`;
  }
}

@customElement("app-root")
class AppRoot extends LitElement {
  static styles = css`
    :host { display: flex; flex-direction: column; box-sizing: border-box; min-height: 100vh; padding: 41px 0 43px; background: #fff; color: #000; font: 11px/14px "DejaVu Sans", Verdana, sans-serif; }
    .work { flex: 1; display: flex; }
    .form { flex: 0 0 529px; margin-bottom: 1px; }
    .drawing { flex: 1; min-width: 0; margin-bottom: 1px; }
    .status { box-sizing: border-box; height: 33px; border: solid #a0a0a0; border-width: 1px 0 0 1px; }
  `;
  render() {
    return html`
      <tool-bars></tool-bars>
      <main class="work"><column-form class="form"></column-form><system-drawing class="drawing"></system-drawing></main>
      <footer class="status"></footer>`;
  }
}
